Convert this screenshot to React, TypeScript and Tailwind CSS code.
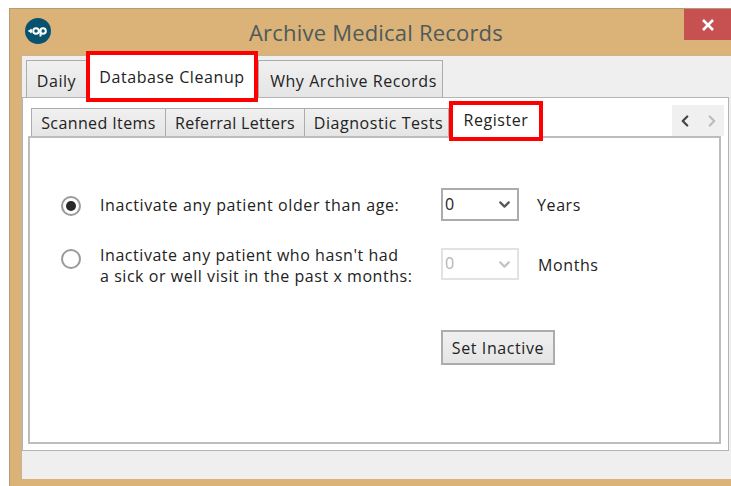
import { ChevronDown, ChevronLeft, ChevronRight } from "lucide-react";

const tabFont = "font-['Open_Sans','Noto_Sans',sans-serif]";

function OuterTab({ label, width, extra = "" }: { label: string; width: string; extra?: string }) {
  return (
    <div className={`${width} ${extra} h-[37px] pt-[3px] flex items-center justify-center border border-b-0 border-[#acacac] bg-gradient-to-b from-[#f0f0f0] to-[#e5e5e5] text-[16px] tracking-[0.55px] text-[#222]`}>
      {label}
    </div>
  );
}

function InnerTab({ label, width, extra = "" }: { label: string; width: string; extra?: string }) {
  return (
    <div className={`${width} ${extra} h-[28px] flex items-center justify-center border border-b-0 border-[#acacac] -ml-px first:ml-0 bg-gradient-to-b from-[#f0f0f0] to-[#e5e5e5] text-[16px] text-[#222]`}>
      {label}
    </div>
  );
}

function Radio({ checked }: { checked?: boolean }) {
  return (
    <div className="w-[20px] h-[20px] rounded-full border-2 border-[#9a9a9a] bg-white flex items-center justify-center shrink-0">
      {checked && <div className="w-[10px] h-[10px] rounded-full bg-[#2a2a2a]" />}
    </div>
  );
}

function Select({ disabled }: { disabled?: boolean }) {
  return (
    <div className={`w-[78px] shrink-0 flex items-center justify-between pl-[2px] pr-[4px] border-2 bg-white text-[16px] ${disabled ? "h-[32px] border-[#e2e2e2] text-[#b5b5b5]" : "h-[33px] border-[#acacac] text-[#222]"}`}>
      <span className="-mt-[2px]">0</span>
      <ChevronDown size={17} strokeWidth={3} className={disabled ? "text-[#c4c4c4]" : "text-[#555]"} />
    </div>
  );
}

export default function App() {
  return (
    <div className={`w-[731px] h-[486px] bg-white pt-[8px] pl-[9px] overflow-hidden ${tabFont}`}>
      <div className="h-[478px] flex flex-col bg-[#dbb277] border-l border-t border-[#b59a72]">
        {/* Title bar */}
        <div className="h-[46px] shrink-0 flex items-start">
          <div className="w-[50px] h-[44px] flex items-center pl-[15px] shrink-0">
            <div className="w-[26px] h-[26px] rounded-full bg-[#07536f] flex items-center justify-center">
              <svg width="20" height="12" viewBox="0 0 20 12" fill="none" stroke="white" strokeWidth="2">
                <path d="M0.5 6H4" />
                <path d="M3.5 4L1.5 6L3.5 8" strokeWidth="1.2" />
                <circle cx="8" cy="6" r="2.8" />
                <circle cx="15" cy="6" r="2.8" />
                <path d="M12.5 5V11.5" />
              </svg>
            </div>
          </div>
          <div className="flex-1 h-[46px] flex items-center justify-center text-[22px] tracking-[0.2px] text-[#4d5b5a] pl-[8px]">
            Archive Medical Records
          </div>
          <div className="w-[47px] h-[31px] shrink-0 bg-[#c75050] flex items-center justify-center">
            <svg width="14" height="14" viewBox="0 0 14 14" stroke="white" strokeWidth="2.6">
              <path d="M2 2L12 12M12 2L2 12" />
            </svg>
          </div>
        </div>

        {/* Client area */}
        <div className="ml-[11px] mb-[7px] flex-1 flex flex-col bg-[#efefef] border-l border-t border-[#c9b48f]">
          <div className="h-[41px] shrink-0 flex items-end pl-[4px]">
            <OuterTab label="Daily" width="w-[61px]" />
            <div className="relative z-10 w-[172px] h-[51px] -mb-[5px] -ml-px border-[4px] border-[#ff0000] bg-white flex items-center justify-center text-[16px] tracking-[0.6px] text-[#222] pt-[1px]">
              Database Cleanup
            </div>
            <OuterTab label="Why Archive Records" width="w-[185px]" extra="pl-[6px]" />
          </div>

          {/* Outer tab page */}
          <div className="h-[354px] shrink-0 mr-[2px] border border-[#b4b4b4] bg-white flex flex-col pl-[5px] pr-[7px] pb-[6px]">
            <div className="h-[38px] shrink-0 flex items-end pl-[3px]">
              <InnerTab label="Scanned Items" width="w-[135px]" extra="tracking-[0.4px]" />
              <InnerTab label="Referral Letters" width="w-[140px]" extra="tracking-[0.3px]" />
              <InnerTab label="Diagnostic Tests" width="w-[145px]" extra="tracking-[0.55px] pl-[4px]" />
              <div className="relative z-10 w-[94px] h-[40px] -mb-[5px] border-[4px] border-[#ff0000] bg-white flex items-center justify-center text-[16px] tracking-[0.55px] text-[#222] pb-[2px]">
                Register
              </div>
              <div className="ml-auto -mr-[3px] w-[52px] h-[31px] bg-[#f0f0f0] flex items-center justify-center gap-[9px]">
                <ChevronLeft size={18} strokeWidth={3} className="text-[#444]" />
                <ChevronRight size={18} strokeWidth={3} className="text-[#bcbcbc]" />
              </div>
            </div>

            {/* Inner tab page */}
            <div className="flex-1 border-2 border-[#bdbdbd] bg-white pt-[50px] pl-[31px] text-[16px] tracking-[0.6px] text-[#222]">
              <div className="flex items-center h-[33px]">
                <div className="mt-[3px]"><Radio checked /></div>
                <div className="w-[360px] pl-[19px] leading-[20px] mt-[1px] whitespace-nowrap">Inactivate any patient older than age:</div>
                <Select />
                <div className="pl-[18px] mt-[1px]">Years</div>
              </div>
              <div className="flex mt-[27px]">
                <div className="pt-[1px]"><Radio /></div>
                <div className="w-[360px] pl-[19px] leading-[21px] -mt-[3px] whitespace-nowrap tracking-[0.55px]">
                  Inactivate any patient who hasn't had
                  <br />
                  a sick or well visit in the past x months:
                </div>
                <Select disabled />
                <div className="pl-[19px] leading-[32px] mt-[1px]">Months</div>
              </div>
              <div className="mt-[43px] ml-[380px] w-[114px] h-[35px] border-2 border-[#acacac] bg-gradient-to-b from-[#f0f0f0] to-[#e5e5e5] flex items-center justify-center">
                Set Inactive
              </div>
            </div>
          </div>

          {/* Status strip */}
          <div className="flex-1" />
        </div>
      </div>
    </div>
  );
}
